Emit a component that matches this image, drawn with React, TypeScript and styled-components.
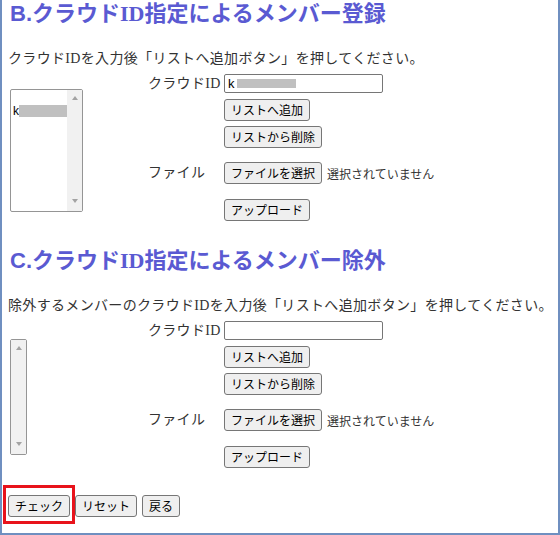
import React from 'react';
import styled, { createGlobalStyle } from 'styled-components';

const GlobalStyle = createGlobalStyle`
  html, body { margin: 0; padding: 0; background: #fff; }
  body { font-family: "Liberation Serif", "Noto Sans CJK JP", serif; }
`;

const Frame = styled.div`
  box-sizing: border-box;
  width: 560px;
  height: 535px;
  border: 2px solid #6f8fc0;
  border-top: none;
  padding: 0 0 0 6px;
  color: #333;
  overflow: hidden;
`;

const Section = styled.section<{ $top: number }>`
  margin-top: ${(p) => p.$top}px;
`;

const Title = styled.h2`
  margin: 0;
  padding-left: 2px;
  font-family: "Liberation Serif", "Noto Sans CJK JP", serif;
  font-size: 22px;
  line-height: 28px;
  font-weight: bold;
  color: #5a5ad2;
  white-space: nowrap;
`;

const Letter = styled.span`
  font-family: "Liberation Sans", "Noto Sans CJK JP", sans-serif;
`;

const Lead = styled.p`
  margin: 21px 0 0;
  font-size: 14px;
  line-height: 20px;
  letter-spacing: 0.33px;
  white-space: nowrap;
`;

const FormArea = styled.div`
  display: flex;
  margin-top: 5px;
`;

const ListCell = styled.div`
  width: 140px;
  display: flex;
  align-items: center;
  padding-top: 5px;
  box-sizing: border-box;
`;

const ListBox = styled.div<{ $w: number; $h: number }>`
  box-sizing: border-box;
  margin-left: 2px;
  width: ${(p) => p.$w}px;
  height: ${(p) => p.$h}px;
  border: 1px solid #959595;
  border-radius: 2px;
  background: #fff;
  display: flex;
`;

const Options = styled.div`
  flex: 1;
  padding-top: 15px;
  overflow: hidden;
`;

const OptionRow = styled.div`
  display: flex;
  align-items: center;
  height: 12px;
  padding-left: 2px;
  font-family: "Liberation Sans", sans-serif;
  font-size: 12px;
  color: #000;
`;

const Redacted = styled.span<{ $w?: number; $h: number }>`
  display: inline-block;
  ${(p) => (p.$w ? `width: ${p.$w}px;` : 'flex: 1;')}
  height: ${(p) => p.$h}px;
  background: #c0c0c0;
`;

const ScrollTrack = styled.div`
  width: 15px;
  background: #f1f1f1;
  display: flex;
  flex-direction: column;
  align-items: center;
  justify-content: space-between;
  padding: 6px 0 8px;
  box-sizing: border-box;
`;

const Arrow = styled.span<{ $down?: boolean }>`
  width: 0;
  height: 0;
  border-left: 3.5px solid transparent;
  border-right: 3.5px solid transparent;
  ${(p) =>
    p.$down
      ? 'border-top: 4px solid #a3a3a3;'
      : 'border-bottom: 4px solid #a3a3a3;'}
`;

const Fields = styled.div`
  display: flex;
  flex-direction: column;
`;

const FieldRow = styled.div<{ $gap: number }>`
  display: grid;
  grid-template-columns: 76px auto;
  align-items: center;
  margin-top: ${(p) => p.$gap}px;
`;

const Label = styled.span`
  font-size: 14px;
  line-height: 18px;
  letter-spacing: 0.3px;
  white-space: nowrap;
`;

const Control = styled.div`
  grid-column: 2;
  display: flex;
  align-items: center;
`;

const TextBox = styled.div`
  box-sizing: border-box;
  width: 159px;
  height: 19px;
  border: 1px solid #767676;
  border-radius: 2px;
  background: #fff;
  display: flex;
  align-items: center;
  padding-left: 3px;
  font-family: "Liberation Sans", sans-serif;
  font-size: 13px;
  color: #000;
`;

const Button = styled.button`
  box-sizing: border-box;
  height: 22px;
  padding: 0 6px;
  margin: 0;
  border: 1px solid #767676;
  border-radius: 3px;
  background: #efefef;
  color: #000;
  font-family: "Noto Sans CJK JP", sans-serif;
  font-size: 12px;
  line-height: 1;
  display: inline-flex;
  align-items: center;
  white-space: nowrap;
  cursor: default;
`;

const FileNote = styled.span`
  margin-left: 5px;
  font-family: "Noto Sans CJK JP", sans-serif;
  font-size: 12px;
  color: #333;
  white-space: nowrap;
`;

const Actions = styled.div`
  display: flex;
  gap: 5px;
  margin-top: 27px;
`;

const Marked = styled.div`
  position: relative;
  display: flex;
`;

const Annotation = styled.span`
  position: absolute;
  left: -5px;
  top: -10px;
  width: 72px;
  height: 39px;
  box-sizing: border-box;
  border: 3px solid #e8131b;
  pointer-events: none;
`;

type FormProps = {
  filled: boolean;
};

const MemberForm: React.FC<FormProps> = ({ filled }) => (
  <FormArea>
    <ListCell>
      <ListBox $w={filled ? 73 : 17} $h={filled ? 123 : 116}>
        {filled && (
          <Options>
            <OptionRow>
              k<Redacted $h={12} />
            </OptionRow>
          </Options>
        )}
        <ScrollTrack>
          <Arrow />
          <Arrow $down />
        </ScrollTrack>
      </ListBox>
    </ListCell>
    <Fields>
      <FieldRow $gap={0}>
        <Label>クラウドID</Label>
        <Control>
          <TextBox>
            {filled && (
              <>
                k<Redacted $w={59} $h={9} style={{ marginLeft: 2 }} />
              </>
            )}
          </TextBox>
        </Control>
      </FieldRow>
      <FieldRow $gap={6}>
        <Control>
          <Button>リストへ追加</Button>
        </Control>
      </FieldRow>
      <FieldRow $gap={5}>
        <Control>
          <Button>リストから削除</Button>
        </Control>
      </FieldRow>
      <FieldRow $gap={14}>
        <Label>ファイル</Label>
        <Control>
          <Button>ファイルを選択</Button>
          <FileNote>選択されていません</FileNote>
        </Control>
      </FieldRow>
      <FieldRow $gap={15}>
        <Control>
          <Button>アップロード</Button>
        </Control>
      </FieldRow>
    </Fields>
  </FormArea>
);

export default function App() {
  return (
    <>
      <GlobalStyle />
      <Frame>
        <Section $top={0}>
          <Title>
            <Letter>B.</Letter>クラウドID指定によるメンバー登録
          </Title>
          <Lead>クラウドIDを入力後「リストへ追加ボタン」を押してください。</Lead>
          <MemberForm filled />
        </Section>
        <Section $top={26}>
          <Title>
            <Letter>C.</Letter>クラウドID指定によるメンバー除外
          </Title>
          <Lead>
            除外するメンバーのクラウドIDを入力後「リストへ追加ボタン」を押してください。
          </Lead>
          <MemberForm filled={false} />
        </Section>
        <Actions>
          <Marked>
            <Button>チェック</Button>
            <Annotation />
          </Marked>
          <Button>リセット</Button>
          <Button>戻る</Button>
        </Actions>
      </Frame>
    </>
  );
}
